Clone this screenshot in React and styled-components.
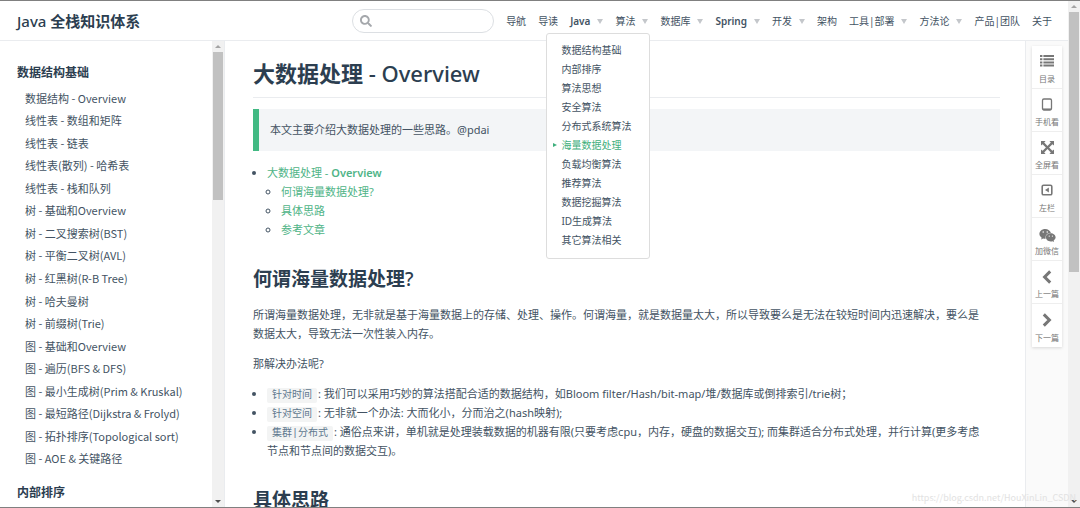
import React from "react";
import styled, { createGlobalStyle } from "styled-components";
import { FaSearch, FaWeixin } from "react-icons/fa";

const GlobalStyle = createGlobalStyle`
  * {
    box-sizing: border-box;
  }

  body {
    margin: 0;
    color: #435363;
    background: #fff;
    font-family: "Noto Sans", "Noto Sans CJK SC", sans-serif;
    font-size: 11px;
    line-height: 19px;
  }

  a {
    color: inherit;
    text-decoration: none;
  }

  ul {
    margin: 0;
    padding: 0;
  }
`;

const Page = styled.div`
  position: relative;
  display: flex;
  height: 100vh;
  overflow: hidden;
  border-top: 1px solid #808080;
  border-bottom: 1px solid #808080;
`;

const Site = styled.div`
  flex: 1;
  min-width: 0;
  display: flex;
  flex-direction: column;
`;

// Header
const Header = styled.header`
  display: flex;
  align-items: center;
  flex: none;
  height: 40px;
  padding: 1px 16px 0 17px;
  border-bottom: 1px solid #eaecef;
`;

const SiteName = styled.a`
  margin-right: auto;
  color: #2c3e50;
  font-size: 15px;
  font-weight: 700;
`;

const Latin = styled.span`
  font-weight: 500;
`;

const SearchBox = styled.label`
  display: flex;
  align-items: center;
  width: 142px;
  height: 24px;
  padding: 0 7px;
  border: 1px solid #dcdfe3;
  border-radius: 12px;
  color: #a5a8ac;
`;

const SearchInput = styled.input`
  flex: 1;
  min-width: 0;
  margin-left: 5px;
  padding: 0;
  border: 0;
  outline: 0;
  background: none;
  font: inherit;
`;

const Nav = styled.nav`
  display: flex;
  gap: 12px;
  margin-left: 12px;
  font-size: 10px;
`;

const NavItem = styled.div`
  position: relative;
`;

const NavLink = styled.a`
  display: flex;
  align-items: center;
  font-weight: ${(p) => (p.$bold ? 600 : 400)};
`;

const Caret = styled.span`
  margin-left: 7px;
  border: 3px solid transparent;
  border-top: 5px solid #c4c7cb;
  border-bottom: 0;
`;

const Dropdown = styled.ul`
  position: absolute;
  z-index: 2;
  top: 21px;
  right: -2px;
  width: 104px;
  padding: 7px 0 8px;
  border: 1px solid #dddddd;
  border-radius: 3px;
  background: #fff;
  list-style: none;
`;

const DropdownLink = styled.a`
  display: flex;
  align-items: center;
  padding-left: ${(p) => (p.$active ? 6 : 14)}px;
  color: ${(p) => (p.$active ? "#3eaf7c" : "inherit")};

  &::before {
    content: "";
    display: ${(p) => (p.$active ? "block" : "none")};
    margin-right: 4px;
    border: 2px solid transparent;
    border-left: 4px solid #3eaf7c;
    border-right: 0;
  }
`;

// Body
const Columns = styled.div`
  flex: 1;
  min-height: 0;
  display: flex;
`;

const Sidebar = styled.aside`
  display: flex;
  flex: none;
  width: 225px;
  border-right: 1px solid #eaecef;
`;

const SidebarBody = styled.div`
  flex: 1;
  padding: 22px 0 0 17px;
  overflow: hidden;
`;

const SidebarTitle = styled.h3`
  margin: 0;
  color: #2c3e50;
  font-size: 12px;
  line-height: 20px;
  font-weight: 700;
`;

const SidebarList = styled.ul`
  display: grid;
  grid-auto-rows: 1fr;
  align-items: center;
  height: 383px;
  margin: 4px 0 13px;
  padding-left: 8px;
  font-family: "Noto Sans CJK SC", sans-serif;
  list-style: none;
  white-space: nowrap;
`;

const Article = styled.main`
  flex: 1;
  min-width: 0;
  padding: 18px 25px 0 28px;
  overflow: hidden;
`;

const Title = styled.h1`
  margin: 0 0 11px;
  padding-bottom: 10px;
  border-bottom: 1px solid #eaecef;
  color: #2c3e50;
  font-size: 22px;
  line-height: 28px;
  font-weight: 700;
`;

const Quote = styled.blockquote`
  margin: 0 0 12px;
  padding: 11px;
  border-left: 6px solid #42b983;
  background: #f3f5f7;
  line-height: 20px;
`;

const Heading = styled.h2`
  margin: 28px 0 14px;
  color: #2c3e50;
  font-size: 19px;
  line-height: 24px;
  font-weight: 700;
`;

const Text = styled.p`
  margin: 0 0 11px;
`;

const BulletList = styled.ul`
  padding-left: 14px;
`;

const TocLink = styled.a`
  color: #4fb487;
`;

const TocLatin = styled.span`
  font-weight: 600;
`;

const Code = styled.code`
  margin-right: 1px;
  padding: 2px 5px;
  border-radius: 2px;
  background: #f3f4f4;
  color: #60788f;
  font-family: "Liberation Mono", "Noto Sans CJK SC", monospace;
  font-size: 10px;
  line-height: 10px;
`;

// Right tool rail
const Rail = styled.aside`
  flex: none;
  width: 43px;
  padding: 5px 6px;
  border-left: 1px solid #eaecef;
  background: #fafafa;
`;

const RailPanel = styled.div`
  display: flex;
  flex-direction: column;
  background: #fff;
  box-shadow: 0 1px 3px rgba(0, 0, 0, 0.14);
`;

const RailButton = styled.button`
  display: flex;
  flex-direction: column;
  align-items: center;
  justify-content: space-between;
  height: 43px;
  padding: 9px 0 3px;
  border: 0;
  border-bottom: 1px solid #eeeeee;
  background: none;
  color: #777777;
  font-family: inherit;
  font-size: 8px;
  line-height: 12px;
  white-space: nowrap;

  &:last-child {
    border-bottom: 0;
  }
`;

// Scrollbars
const Scrollbar = styled.div`
  display: flex;
  flex-direction: column;
  align-items: center;
  flex: none;
  width: 12px;
  padding: 4px 0;
  background: #f1f1f1;
`;

const Thumb = styled.div`
  width: 10px;
  height: ${(p) => p.$size}px;
  margin: 4px 0 auto;
  background: #c1c1c1;
`;

const Arrow = styled.span`
  border: 3px solid transparent;
  border-top: ${(p) => (p.$up ? "0" : "3px solid #505050")};
  border-bottom: ${(p) => (p.$up ? "3px solid #a3a3a3" : "0")};
`;

const Watermark = styled.span`
  position: absolute;
  right: 4px;
  bottom: 0;
  color: #e2e2e2;
  font-family: "Noto Sans CJK SC", sans-serif;
  font-size: 9px;
`;

// Tool icons
const ListIcon = () => (
  <svg width="14" height="12" viewBox="0 0 14 12" fill="currentColor">
    <path d="M0 0h2.4v2H0zM3.4 0H14v2H3.4zM0 3.2h2.4v2H0zM3.4 3.2H14v2H3.4zM0 6.4h2.4v2H0zM3.4 6.4H14v2H3.4zM0 9.6h2.4v2H0zM3.4 9.6H14v2H3.4z" />
  </svg>
);

const TabletIcon = () => (
  <svg width="12" height="13" viewBox="0 0 12 13" fill="none" stroke="currentColor">
    <rect x="1.5" y="1" width="9" height="11" rx="1.4" strokeWidth="1.3" />
    <path d="M2 11.2h8" strokeWidth="1.5" />
  </svg>
);

const ExpandIcon = () => (
  <svg width="13" height="13" viewBox="0 0 13 13" fill="currentColor">
    <path d="M0 0h4.6L3.2 1.6l3.3 3.3 3.3-3.3L8.4 0H13v4.6l-1.6-1.4-3.3 3.3 3.3 3.3L13 8.4V13H8.4l1.4-1.6-3.3-3.3-3.3 3.3L4.6 13H0V8.4l1.6 1.4 3.3-3.3-3.3-3.3L0 4.6z" />
  </svg>
);

const PanelLeftIcon = () => (
  <svg width="12" height="12" viewBox="0 0 12 12">
    <rect x="1.2" y="1.2" width="9.6" height="9.6" rx="1.4" fill="none" stroke="currentColor" strokeWidth="1.6" />
    <path d="M7.9 3.4v5.2L4 6z" fill="currentColor" />
  </svg>
);

const ChevronIcon = ({ next }) => (
  <svg width="12" height="14" viewBox="0 0 12 14" fill="none" stroke="currentColor" strokeWidth="3">
    <path d={next ? "M2.8 1.4 8.4 7l-5.6 5.6" : "M9.2 1.4 3.6 7l5.6 5.6"} />
  </svg>
);

const navItems = [
  { label: "导航" },
  { label: "导读" },
  { label: "Java", menu: true, bold: true },
  { label: "算法", menu: true, open: true },
  { label: "数据库", menu: true },
  { label: "Spring", menu: true, bold: true },
  { label: "开发", menu: true },
  { label: "架构" },
  { label: "工具|部署", menu: true },
  { label: "方法论", menu: true },
  { label: "产品|团队" },
  { label: "关于" },
];

const algorithmMenu = [
  "数据结构基础",
  "内部排序",
  "算法思想",
  "安全算法",
  "分布式系统算法",
  "海量数据处理",
  "负载均衡算法",
  "推荐算法",
  "数据挖掘算法",
  "ID生成算法",
  "其它算法相关",
];

const sidebarItems = [
  "数据结构 - Overview",
  "线性表 - 数组和矩阵",
  "线性表 - 链表",
  "线性表(散列) - 哈希表",
  "线性表 - 栈和队列",
  "树 - 基础和Overview",
  "树 - 二叉搜索树(BST)",
  "树 - 平衡二叉树(AVL)",
  "树 - 红黑树(R-B Tree)",
  "树 - 哈夫曼树",
  "树 - 前缀树(Trie)",
  "图 - 基础和Overview",
  "图 - 遍历(BFS & DFS)",
  "图 - 最小生成树(Prim & Kruskal)",
  "图 - 最短路径(Dijkstra & Frolyd)",
  "图 - 拓扑排序(Topological sort)",
  "图 - AOE & 关键路径",
];

const tools = [
  { label: "目录", icon: <ListIcon /> },
  { label: "手机看", icon: <TabletIcon /> },
  { label: "全屏看", icon: <ExpandIcon /> },
  { label: "左栏", icon: <PanelLeftIcon /> },
  { label: "加微信", icon: <FaWeixin size={17} /> },
  { label: "上一篇", icon: <ChevronIcon /> },
  { label: "下一篇", icon: <ChevronIcon next /> },
];

const ScrollTrack = ({ size }) => (
  <Scrollbar>
    <Arrow $up />
    <Thumb $size={size} />
    <Arrow />
  </Scrollbar>
);

const App = () => {
  return (
    <Page>
      <GlobalStyle />
      <Site>
        <Header>
          <SiteName href="#">
            <Latin>Java</Latin> 全栈知识体系
          </SiteName>
          <SearchBox>
            <FaSearch size={12} />
            <SearchInput type="text" aria-label="搜索" />
          </SearchBox>
          <Nav>
            {navItems.map((item) => (
              <NavItem key={item.label}>
                <NavLink href="#" $bold={item.bold}>
                  {item.label}
                  {item.menu && <Caret />}
                </NavLink>
                {item.open && (
                  <Dropdown>
                    {algorithmMenu.map((name) => (
                      <li key={name}>
                        <DropdownLink href="#" $active={name === "海量数据处理"}>
                          {name}
                        </DropdownLink>
                      </li>
                    ))}
                  </Dropdown>
                )}
              </NavItem>
            ))}
          </Nav>
        </Header>
        <Columns>
          <Sidebar>
            <SidebarBody>
              <SidebarTitle>数据结构基础</SidebarTitle>
              <SidebarList>
                {sidebarItems.map((name) => (
                  <li key={name}>
                    <a href="#">{name}</a>
                  </li>
                ))}
              </SidebarList>
              <SidebarTitle>内部排序</SidebarTitle>
            </SidebarBody>
            <ScrollTrack size={148} />
          </Sidebar>
          <Article>
            <Title>
              大数据处理 <Latin>- Overview</Latin>
            </Title>
            <Quote>本文主要介绍大数据处理的一些思路。@pdai</Quote>
            <BulletList>
              <li>
                <TocLink href="#">
                  大数据处理 - <TocLatin>Overview</TocLatin>
                </TocLink>
                <BulletList>
                  <li>
                    <TocLink href="#">何谓海量数据处理?</TocLink>
                  </li>
                  <li>
                    <TocLink href="#">具体思路</TocLink>
                  </li>
                  <li>
                    <TocLink href="#">参考文章</TocLink>
                  </li>
                </BulletList>
              </li>
            </BulletList>
            <Heading>
              何谓海量数据处理<Latin>?</Latin>
            </Heading>
            <Text>
              所谓海量数据处理，无非就是基于海量数据上的存储、处理、操作。何谓海量，就是数据量太大，所以导致要么是无法在较短时间内迅速解决，要么是
              <br />
              数据太大，导致无法一次性装入内存。
            </Text>
            <Text>那解决办法呢?</Text>
            <BulletList>
              <li>
                <Code>针对时间</Code>
                : 我们可以采用巧妙的算法搭配合适的数据结构，如Bloom
                filter/Hash/bit-map/堆/数据库或倒排索引/trie树；
              </li>
              <li>
                <Code>针对空间</Code>
                : 无非就一个办法: 大而化小，分而治之(hash映射);
              </li>
              <li>
                <Code>集群|分布式</Code>
                : 通俗点来讲，单机就是处理装载数据的机器有限(只要考虑cpu，内存，硬盘的数据交互);
                而集群适合分布式处理，并行计算(更多考虑
                <br />
                节点和节点间的数据交互)。
              </li>
            </BulletList>
            <Heading>具体思路</Heading>
          </Article>
          <Rail>
            <RailPanel>
              {tools.map((tool) => (
                <RailButton key={tool.label} type="button">
                  {tool.icon}
                  {tool.label}
                </RailButton>
              ))}
            </RailPanel>
          </Rail>
        </Columns>
      </Site>
      <ScrollTrack size={260} />
      <Watermark>https://blog.csdn.net/HouXinLin_CSDN</Watermark>
    </Page>
  );
};

export default App;
